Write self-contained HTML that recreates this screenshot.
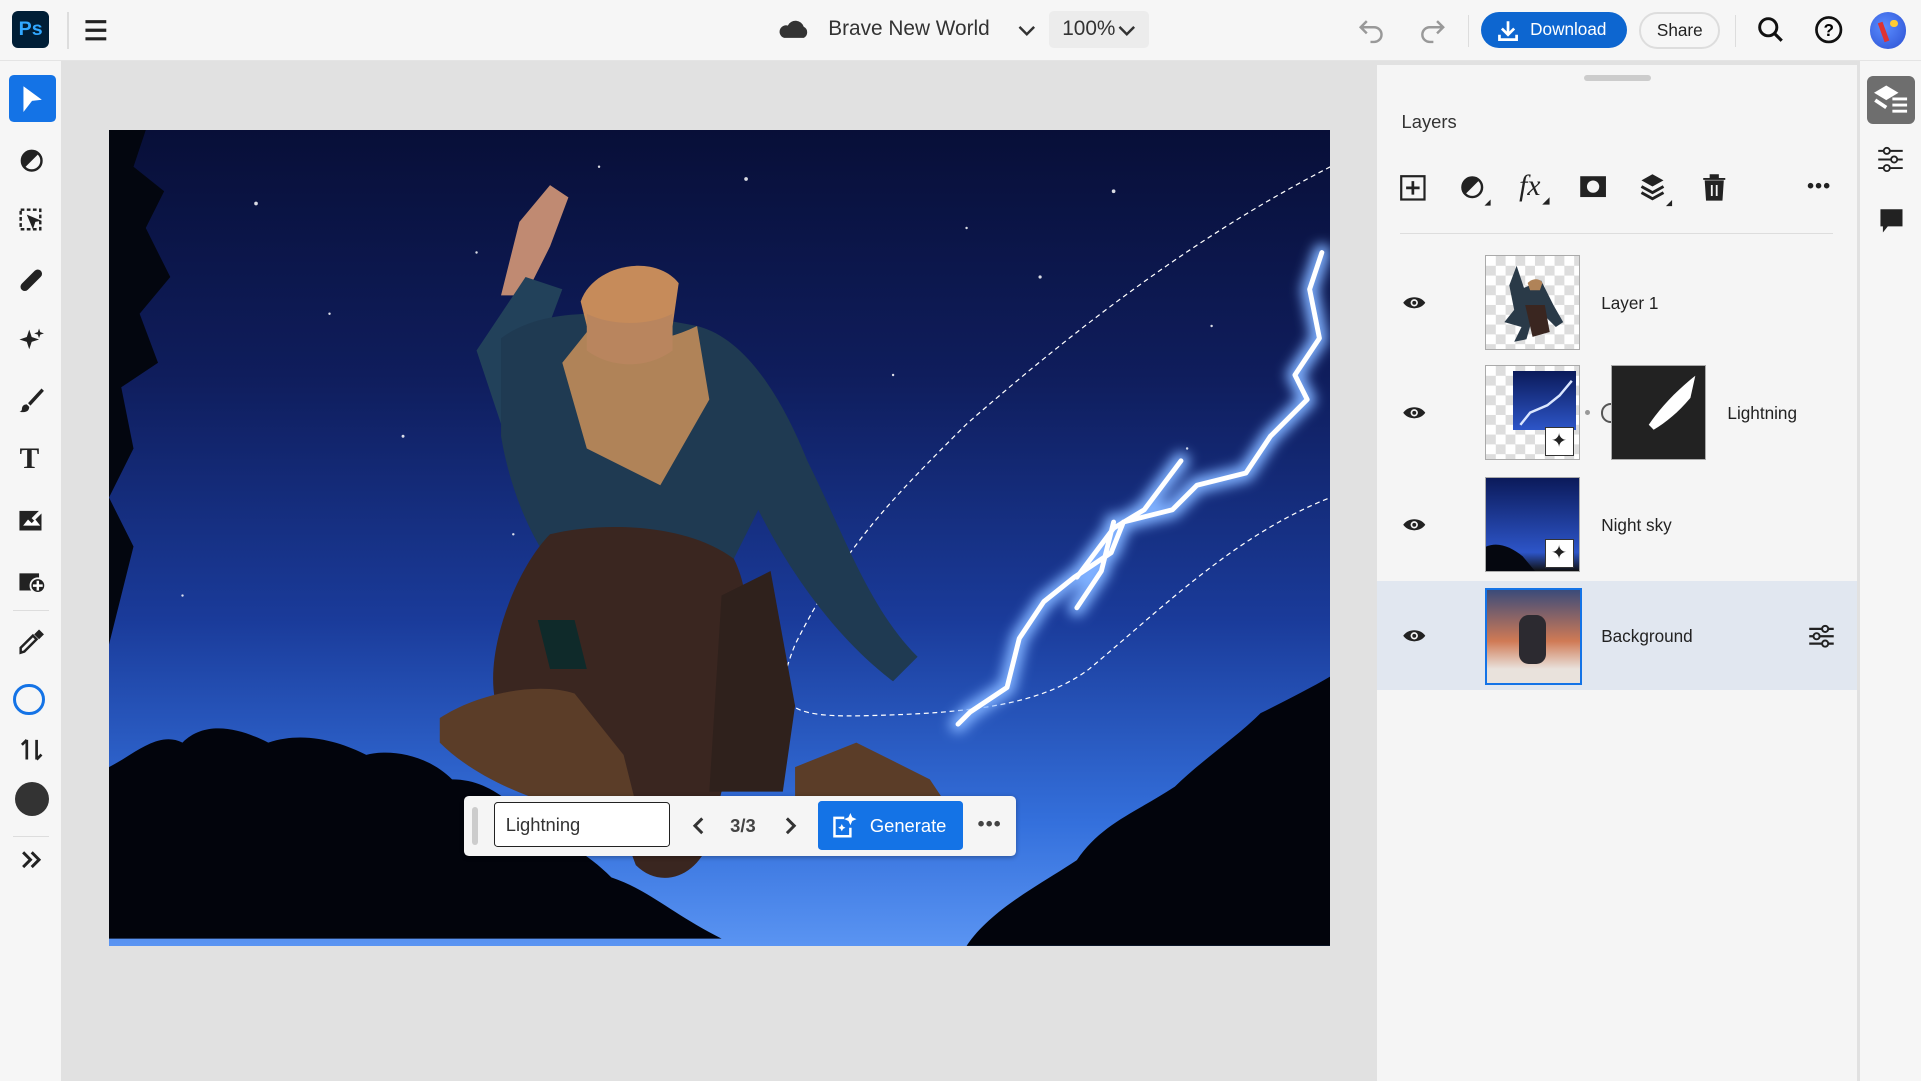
<!DOCTYPE html>
<html><head><meta charset="utf-8"><style>
html,body{margin:0;padding:0;}
body{width:1568px;height:882px;zoom:1.22513;overflow:hidden;background:#e1e1e1;font-family:"Liberation Sans",sans-serif;position:relative;color:#222}
.a{position:absolute}
.top{left:0;top:0;width:1568px;height:49px;background:#f6f6f6;border-bottom:1px solid #e4e4e4}
.left{left:0;top:50px;width:50px;height:832px;background:#f6f6f6}
.rp{left:1124px;top:53px;width:392px;height:829px;background:#f5f5f5}
.rs{left:1518px;top:50px;width:50px;height:832px;background:#f6f6f6}
.ic{position:absolute;left:14px;width:24px;height:24px}
.row{position:absolute;left:1124px;width:392px;height:90px}
.th{position:absolute;left:88px;top:6px;width:76px;height:76px;border:1px solid #aaa;background:#fff;
 background-image:linear-gradient(45deg,#ddd 25%,transparent 25%,transparent 75%,#ddd 75%),linear-gradient(45deg,#ddd 25%,transparent 25%,transparent 75%,#ddd 75%);background-size:16px 16px;background-position:0 0,8px 8px}
.lbl{position:absolute;left:183px;top:37px;font-size:14px;color:#222}
.eye{position:absolute;left:20px;top:37px}
</style></head><body>
<div class="a top"></div>
<div class="a" style="left:10px;top:9px;width:30px;height:30px;border-radius:5px;background:#001e36;color:#31a8ff;font-weight:bold;font-size:16px;line-height:30px;text-align:center">Ps</div>
<div class="a" style="left:55px;top:10px;width:1px;height:30px;background:#ddd"></div>
<svg class="a" style="left:68px;top:15px" width="22" height="20"><path d="M2 3h17M2 10h17M2 17h17" stroke="#222" stroke-width="2.6"/></svg>
<svg class="a" style="left:635px;top:14px" width="26" height="20"><path d="M5 17h16a5 5 0 0 0 0-9 7 7 0 0 0-13-1 5 5 0 0 0-3 10z" fill="#333"/></svg>
<div class="a" style="left:676px;top:14px;font-size:17px;color:#333">Brave New World</div>
<svg class="a" style="left:830px;top:18px" width="16" height="14"><path d="M2 4l6 6 6-6" stroke="#333" stroke-width="2" fill="none"/></svg>
<div class="a" style="left:856px;top:9px;width:82px;height:30px;background:#ececec;border-radius:4px"></div>
<div class="a" style="left:867px;top:14px;font-size:17px;color:#333">100%</div>
<svg class="a" style="left:912px;top:18px" width="16" height="14"><path d="M2 4l6 6 6-6" stroke="#333" stroke-width="2" fill="none"/></svg>
<svg class="a" style="left:1108px;top:12px" width="26" height="24"><path d="M8 5L3 10l5 5M3 10h11a6 6 0 0 1 0 12h-3" stroke="#999" stroke-width="2" fill="none"/></svg>
<svg class="a" style="left:1155px;top:12px" width="26" height="24"><path d="M18 5l5 5-5 5M23 10H12a6 6 0 0 0 0 12h3" stroke="#999" stroke-width="2" fill="none"/></svg>
<div class="a" style="left:1198px;top:12px;width:1px;height:26px;background:#ddd"></div>
<div class="a" style="left:1209px;top:10px;width:119px;height:29px;border-radius:15px;background:#0d66d0;color:#fff;font-size:14px;line-height:29px"><svg style="position:absolute;left:13px;top:6px" width="18" height="18"><path d="M9 1v10M4 7l5 5 5-5M2 12v4h14v-4" stroke="#fff" stroke-width="2.2" fill="none"/></svg><span style="position:absolute;left:40px">Download</span></div>
<div class="a" style="left:1338px;top:10px;width:63px;height:27px;border-radius:15px;border:2px solid #ddd;font-size:14px;line-height:27px;text-align:center;color:#222">Share</div>
<div class="a" style="left:1416px;top:12px;width:1px;height:26px;background:#ddd"></div>
<svg class="a" style="left:1433px;top:12px" width="24" height="24"><circle cx="10" cy="10" r="7" stroke="#111" stroke-width="2.4" fill="none"/><path d="M15 15l6 6" stroke="#111" stroke-width="2.6"/></svg>
<svg class="a" style="left:1481px;top:12px" width="24" height="24"><circle cx="12" cy="12" r="10" stroke="#111" stroke-width="2.2" fill="none"/><text x="12" y="17" font-size="14" font-weight="bold" text-anchor="middle" font-family="Liberation Sans">?</text></svg>
<div class="a" style="left:1526px;top:10px;width:30px;height:30px;border-radius:50%;background:radial-gradient(circle at 40% 40%,#5a8cff,#2b4fd1);"><div class="a" style="left:9px;top:8px;width:4px;height:16px;background:#d33;transform:rotate(-20deg)"></div><div class="a" style="left:17px;top:6px;width:6px;height:6px;border-radius:50%;background:#fc3"></div></div>

<div class="a left"></div>
<div class="a" style="left:7px;top:61px;width:39px;height:39px;border-radius:4px;background:#1473e6"></div>
<svg class="a" style="left:17px;top:69px" width="20" height="24"><path d="M2 1l15 11-8 1-7 9z" fill="#fff"/></svg>
<svg class="ic" style="top:119px" viewBox="0 0 24 24"><circle cx="12" cy="12" r="8" stroke="#222" stroke-width="2" fill="none"/><path d="M12 4a8 8 0 0 0 0 16z" fill="#222" transform="rotate(45 12 12)"/></svg>
<svg class="ic" style="top:168px" viewBox="0 0 24 24"><rect x="3" y="3" width="16" height="16" stroke="#222" stroke-width="2" stroke-dasharray="3 2" fill="none"/><path d="M8 7l12 5-5 1-2 6z" fill="#222"/></svg>
<svg class="ic" style="top:217px" viewBox="0 0 24 24"><rect x="8" y="1" width="7" height="22" rx="3.5" fill="#222" transform="rotate(45 12 12)"/></svg>
<svg class="ic" style="top:266px" viewBox="0 0 24 24"><path d="M10 3l2 6 6 2-6 2-2 6-2-6-6-2 6-2zM18 2l1 3 3 1-3 1-1 3-1-3-3-1 3-1z" fill="#222"/></svg>
<svg class="ic" style="top:315px" viewBox="0 0 24 24"><path d="M20 2L9 14l2 2L22 4zM8 15c-3 0-4 2-4 4 0 1-1 2-2 2 4 1 8 0 8-4z" fill="#222"/></svg>
<div class="a" style="left:16px;top:362px;font-size:24px;font-weight:bold;font-family:'Liberation Serif',serif;color:#222">T</div>
<svg class="ic" style="top:413px" viewBox="0 0 24 24"><rect x="2" y="4" width="18" height="16" fill="#222"/><path d="M5 16l4-5 3 3 3-3 4 5z" fill="#fff"/><path d="M22 2l-9 9" stroke="#f6f6f6" stroke-width="3"/></svg>
<svg class="ic" style="top:462px" viewBox="0 0 24 24"><rect x="2" y="6" width="16" height="14" fill="#222"/><circle cx="17" cy="16" r="6" fill="#222" stroke="#f6f6f6" stroke-width="1.5"/><path d="M17 12v8M13 16h8" stroke="#fff" stroke-width="2"/></svg>
<div class="a" style="left:11px;top:498px;width:29px;height:1px;background:#ddd"></div>
<svg class="ic" style="top:512px" viewBox="0 0 24 24"><path d="M3 21l3-1 10-10-3-3L3 17z" stroke="#222" stroke-width="2" fill="none"/><path d="M14 6l4-4 4 4-4 4z" fill="#222"/></svg>
<div class="a" style="left:11px;top:558px;width:26px;height:26px;border-radius:50%;border:2.5px solid #1473e6;box-sizing:border-box"></div>
<svg class="ic" style="top:600px" viewBox="0 0 24 24"><path d="M8 20V4M4 8l4-4M16 4v16M20 16l-4 4" stroke="#222" stroke-width="2.2" fill="none"/></svg>
<div class="a" style="left:12px;top:638px;width:28px;height:28px;border-radius:50%;background:#333"></div>
<div class="a" style="left:11px;top:682px;width:29px;height:1px;background:#ddd"></div>
<svg class="ic" style="top:690px" viewBox="0 0 24 24"><path d="M5 6l6 6-6 6M12 6l6 6-6 6" stroke="#222" stroke-width="2.4" fill="none"/></svg>

<!-- canvas image (local coords = page - (89,106)) -->
<div class="a" style="left:89px;top:106px;width:997px;height:666px;overflow:hidden;background:linear-gradient(180deg,#080f38 0%,#0f1d5c 30%,#1a3b9a 60%,#3470dc 85%,#5a94f2 100%)">
 <svg width="997" height="666" style="position:absolute;left:0;top:0">
  <defs><filter id="gl" x="-20%" y="-20%" width="140%" height="140%"><feGaussianBlur stdDeviation="5"/></filter></defs>
  <g fill="#fff" opacity=".85"><circle cx="120" cy="60" r="1.5"/><circle cx="300" cy="100" r="1"/><circle cx="520" cy="40" r="1.5"/><circle cx="700" cy="80" r="1"/><circle cx="820" cy="50" r="1.5"/><circle cx="900" cy="160" r="1"/><circle cx="240" cy="250" r="1.2"/><circle cx="640" cy="200" r="1"/><circle cx="60" cy="380" r="1"/><circle cx="400" cy="30" r="1"/><circle cx="180" cy="150" r="1"/><circle cx="760" cy="120" r="1.3"/><circle cx="330" cy="330" r="1"/><circle cx="880" cy="260" r="1"/></g>
  <!-- left trees -->
  <path d="M0 0h30l-10 30 25 20-15 30 20 40-25 30 15 40-30 20 10 50-20 40 20 40L0 420z" fill="#03060f"/>
  <path d="M0 520c20-10 40-30 60-20 20-20 50-10 70 0 30-10 60 0 80 10 20-5 50 0 70 20 30 0 50 20 70 40 20 10 40 20 60 40 30 10 50 30 90 50H0z" fill="#02040c"/>
  <path d="M700 666c20-30 60-50 90-70 20-30 50-40 80-60 20-20 50-40 70-60 20-10 40-20 57-30v220z" fill="#02040c"/>
  <!-- dashed selection -->
  <path d="M997 30C880 90 780 170 700 240 640 300 600 340 560 420 540 470 550 480 620 478 700 476 760 470 800 440 860 390 920 330 997 300" stroke="#fff" stroke-width="1" stroke-dasharray="4 3" fill="none"/>
  <!-- lightning -->
  <g stroke-linejoin="round" stroke-linecap="round" fill="none">
   <path d="M990 100l-10 30 8 40-20 30 10 20-30 30-20 30-40 10-20 20-40 10-10 25-30 20-25 20-20 30-10 40-30 20-10 10M875 270l-30 40-25 15-30 40M820 320l-10 40-20 30" stroke="#7fb0ff" stroke-width="14" filter="url(#gl)"/>
   <path d="M990 100l-10 30 8 40-20 30 10 20-30 30-20 30-40 10-20 20-40 10-10 25-30 20-25 20-20 30-10 40-30 20-10 10M875 270l-30 40-25 15-30 40M820 320l-10 40-20 30" stroke="#fff" stroke-width="4"/>
  </g>
  <!-- figure -->
  <path d="M335 75l25-30 15 10-15 40-20 40-20 0z" fill="#c08a72"/>
  <path d="M300 180l40-60 30 10-30 80-20 30z" fill="#22415a"/>
  <path d="M320 170c40-30 110-20 160-10 40 10 70 60 90 110 30 60 50 120 90 160l-20 20c-40-30-80-80-110-140l-20 40c-10 40-60 60-110 40-40-20-70-80-80-140z" fill="#1f3a52"/>
  <path d="M390 165c30 10 60 10 90-5l10 60-40 70-60-30-20-70z" fill="#b08358"/>
  <path d="M385 140c10-30 60-40 80-15l-5 35c-20 10-50 10-70 0z" fill="#c68b5a"/>
  <path d="M390 150c20 10 50 10 70 0l0 30c-20 15-50 15-70 0z" fill="#b9855e"/>
  <path d="M360 330c40-10 110-10 150 20 20 40 10 100 0 150l-20 80c-10 30-40 40-60 20l-30-80-80-40c-20-40 10-120 40-150z" fill="#3a2620"/>
  <path d="M500 380l40-20 20 110-10 70h-60z" fill="#2f211c"/>
  <path d="M270 480c30-20 80-30 110-20l40 50 10 40-30 10c-50-10-100-30-130-60z" fill="#5b3d28"/>
  <path d="M560 520l50-20 60 30 20 30-90 5-40-20z" fill="#5b3d28"/>
  <path d="M350 400l30 0 10 40-30 0z" fill="#0f2a2a"/>
 </svg>
</div>
<div class="a" style="left:379px;top:650px;width:450px;height:49px;background:#f5f5f5;border-radius:4px;box-shadow:0 1px 4px rgba(0,0,0,.3)"></div>
<div class="a" style="left:385px;top:659px;width:5px;height:31px;background:#ccc;border-radius:3px"></div>
<div class="a" style="left:403px;top:655px;width:144px;height:36px;border:1.5px solid #222;border-radius:3px;background:#fff;font-size:15px;line-height:36px;padding-left:9px;box-sizing:border-box;color:#333">Lightning</div>
<svg class="a" style="left:563px;top:666px" width="14" height="16"><path d="M10 2L4 8l6 6" stroke="#333" stroke-width="2.4" fill="none"/></svg>
<div class="a" style="left:596px;top:665px;font-size:15px;font-weight:bold;color:#444">3/3</div>
<svg class="a" style="left:638px;top:666px" width="14" height="16"><path d="M4 2l6 6-6 6" stroke="#333" stroke-width="2.4" fill="none"/></svg>
<div class="a" style="left:668px;top:654px;width:118px;height:40px;background:#1473e6;border-radius:3px;color:#fff;font-size:15px;line-height:40px"><svg style="position:absolute;left:11px;top:10px" width="22" height="20"><path d="M10 4H2v15h13v-7" stroke="#fff" stroke-width="2" fill="none"/><path d="M15 0l1.5 3.5L20 5l-3.5 1.5L15 10l-1.5-3.5L10 5l3.5-1.5zM8 9l1 2 2 1-2 1-1 2-1-2-2-1 2-1z" fill="#fff"/></svg><span style="position:absolute;left:42px">Generate</span></div>
<div class="a" style="left:798px;top:664px;font-size:16px;font-weight:bold;color:#444;letter-spacing:1px">•••</div>

<!-- right panel -->
<div class="a rp"></div>
<div class="a" style="left:1293px;top:61px;width:55px;height:5px;border-radius:3px;background:#ccc"></div>
<div class="a" style="left:1144px;top:91px;font-size:15px;color:#333">Layers</div>
<svg class="a" style="left:1143px;top:143px" width="22" height="22"><rect x="1" y="1" width="19" height="19" stroke="#222" stroke-width="1.8" fill="none"/><path d="M10.5 5v11M5 10.5h11" stroke="#222" stroke-width="2.2"/></svg>
<svg class="a" style="left:1192px;top:143px" width="26" height="26"><circle cx="10" cy="10" r="8" stroke="#222" stroke-width="2" fill="none"/><path d="M4.3 15.7A8 8 0 0 1 15.7 4.3z" fill="#222"/><path d="M25 20v5h-5z" fill="#222"/></svg>
<div class="a" style="left:1240px;top:139px;font-size:24px;font-style:italic;font-family:'Liberation Serif',serif;color:#222">fx</div>
<svg class="a" style="left:1258px;top:160px" width="8" height="8"><path d="M7 1v6H1z" fill="#222"/></svg>
<svg class="a" style="left:1289px;top:143px" width="24" height="20"><rect x="1" y="1" width="21" height="17" fill="#222"/><circle cx="11.5" cy="9.5" r="5" fill="#f5f5f5"/></svg>
<svg class="a" style="left:1338px;top:141px" width="28" height="28"><path d="M11 1l9 5-9 5-9-5z" fill="#222"/><path d="M2 11l9 5 9-5M2 16l9 5 9-5" stroke="#222" stroke-width="2.4" fill="none"/><path d="M27 22v5h-5z" fill="#222"/></svg>
<svg class="a" style="left:1389px;top:142px" width="20" height="22"><path d="M1 4h18M7 4V1h6v3M3 6l1 15h12l1-15z" fill="#222" stroke="#222" stroke-width="1.5"/><path d="M8 9v9M12 9v9" stroke="#f5f5f5" stroke-width="1.5"/></svg>
<div class="a" style="left:1475px;top:143px;font-size:16px;font-weight:bold;letter-spacing:1px;color:#222">•••</div>
<div class="a" style="left:1143px;top:190px;width:353px;height:1px;background:#ddd"></div>

<svg width="0" height="0" style="position:absolute"><defs><g id="eye"><path d="M1 8c4-6 14-6 18 0-4 6-14 6-18 0z" fill="#222"/><circle cx="10" cy="8" r="3" fill="#f5f5f5"/><circle cx="10" cy="8" r="1.6" fill="#222"/></g></defs></svg>
<div class="row" style="top:202px"><svg class="eye" width="20" height="16"><use href="#eye"/></svg>
 <div class="th"><svg width="76" height="76" style="position:absolute;left:0;top:0"><path d="M25 8l6 18 14-6 10 20 8 14-6 4-10-10-10 6-4 14-10 2 6-12-14-4 8-10-4-20z" fill="#2a3a48"/><path d="M34 22c4-4 10-4 12 0l-2 6h-8z" fill="#b08358"/><path d="M32 40l16 0 4 22-14 4z" fill="#3a2620"/></svg></div><div class="lbl">Layer 1</div></div>
<div class="row" style="top:292px"><svg class="eye" width="20" height="16"><use href="#eye"/></svg>
 <div class="th"><div class="a" style="left:22px;top:4px;width:52px;height:48px;background:linear-gradient(#0b1a5a,#2d55c8)"><svg width="52" height="48"><path d="M48 8l-10 12-10 8-14 6-8 10" stroke="#dbe7ff" stroke-width="2" fill="none"/></svg></div><div class="a" style="left:48px;top:50px;width:22px;height:22px;background:#fff;border:1px solid #333;font-size:16px;line-height:22px;text-align:center">✦</div></div>
 <div class="a" style="left:170px;top:43px;width:4px;height:4px;border-radius:50%;background:#999"></div>
 <div class="a" style="left:183px;top:37px;width:16px;height:16px;border-radius:50%;border:2px solid #555;background:#eee;box-sizing:border-box"></div>
 <div class="a" style="left:191px;top:6px;width:76px;height:76px;border:1px solid #aaa;background:#222"><svg width="76" height="76"><path d="M30 48c10-15 25-30 38-40l-4 18c-10 12-20 20-30 26z" fill="#fff"/></svg></div>
 <div class="lbl" style="left:286px">Lightning</div></div>
<div class="row" style="top:383px"><svg class="eye" width="20" height="16"><use href="#eye"/></svg>
 <div class="th" style="background:linear-gradient(#0b1a5a,#2d55c8 80%,#111)"><svg width="76" height="76" style="position:absolute;left:0;top:0"><path d="M0 56c10-4 20 0 30 8l10 12H0z" fill="#05070f"/></svg><div class="a" style="left:48px;top:50px;width:22px;height:22px;background:#fff;border:1px solid #333;font-size:16px;line-height:22px;text-align:center">✦</div></div><div class="lbl">Night sky</div></div>
<div class="row" style="top:474px;background:#e1e7f0;height:89px"><svg class="eye" width="20" height="16"><use href="#eye"/></svg>
 <div class="th" style="border:2px solid #1473e6;background:linear-gradient(#3b4b7a,#d07a55 55%,#e9e2dc 85%)"><div class="a" style="left:26px;top:20px;width:22px;height:40px;background:#2c2a30;border-radius:8px"></div></div><div class="lbl">Background</div>
 <svg class="a" style="left:352px;top:35px" width="22" height="20"><path d="M1 4h20M1 10h20M1 16h20" stroke="#222" stroke-width="1.8"/><circle cx="14" cy="4" r="2.5" fill="#e1e7f0" stroke="#222" stroke-width="1.6"/><circle cx="7" cy="10" r="2.5" fill="#e1e7f0" stroke="#222" stroke-width="1.6"/><circle cx="14" cy="16" r="2.5" fill="#e1e7f0" stroke="#222" stroke-width="1.6"/></svg></div>

<div class="a rs"></div>
<div class="a" style="left:1524px;top:62px;width:39px;height:39px;border-radius:5px;background:#6e6e6e"></div>
<svg class="a" style="left:1530px;top:68px" width="28" height="28"><path d="M10 2l10 6-10 6L0 8z" fill="#fff"/><path d="M1 14l9 6" stroke="#fff" stroke-width="3"/><path d="M15 13h12M15 18h12M15 23h12" stroke="#fff" stroke-width="2.4"/></svg>
<svg class="a" style="left:1532px;top:119px" width="22" height="22"><path d="M1 4h20M1 11h20M1 18h20" stroke="#222" stroke-width="1.6"/><circle cx="8" cy="4" r="2.5" fill="#f6f6f6" stroke="#222" stroke-width="1.5"/><circle cx="14" cy="11" r="2.5" fill="#f6f6f6" stroke="#222" stroke-width="1.5"/><circle cx="8" cy="18" r="2.5" fill="#f6f6f6" stroke="#222" stroke-width="1.5"/></svg>
<svg class="a" style="left:1533px;top:170px" width="22" height="22"><path d="M2 1h18v14H8l-4 5v-5H2z" fill="#222"/></svg>
</body></html>
